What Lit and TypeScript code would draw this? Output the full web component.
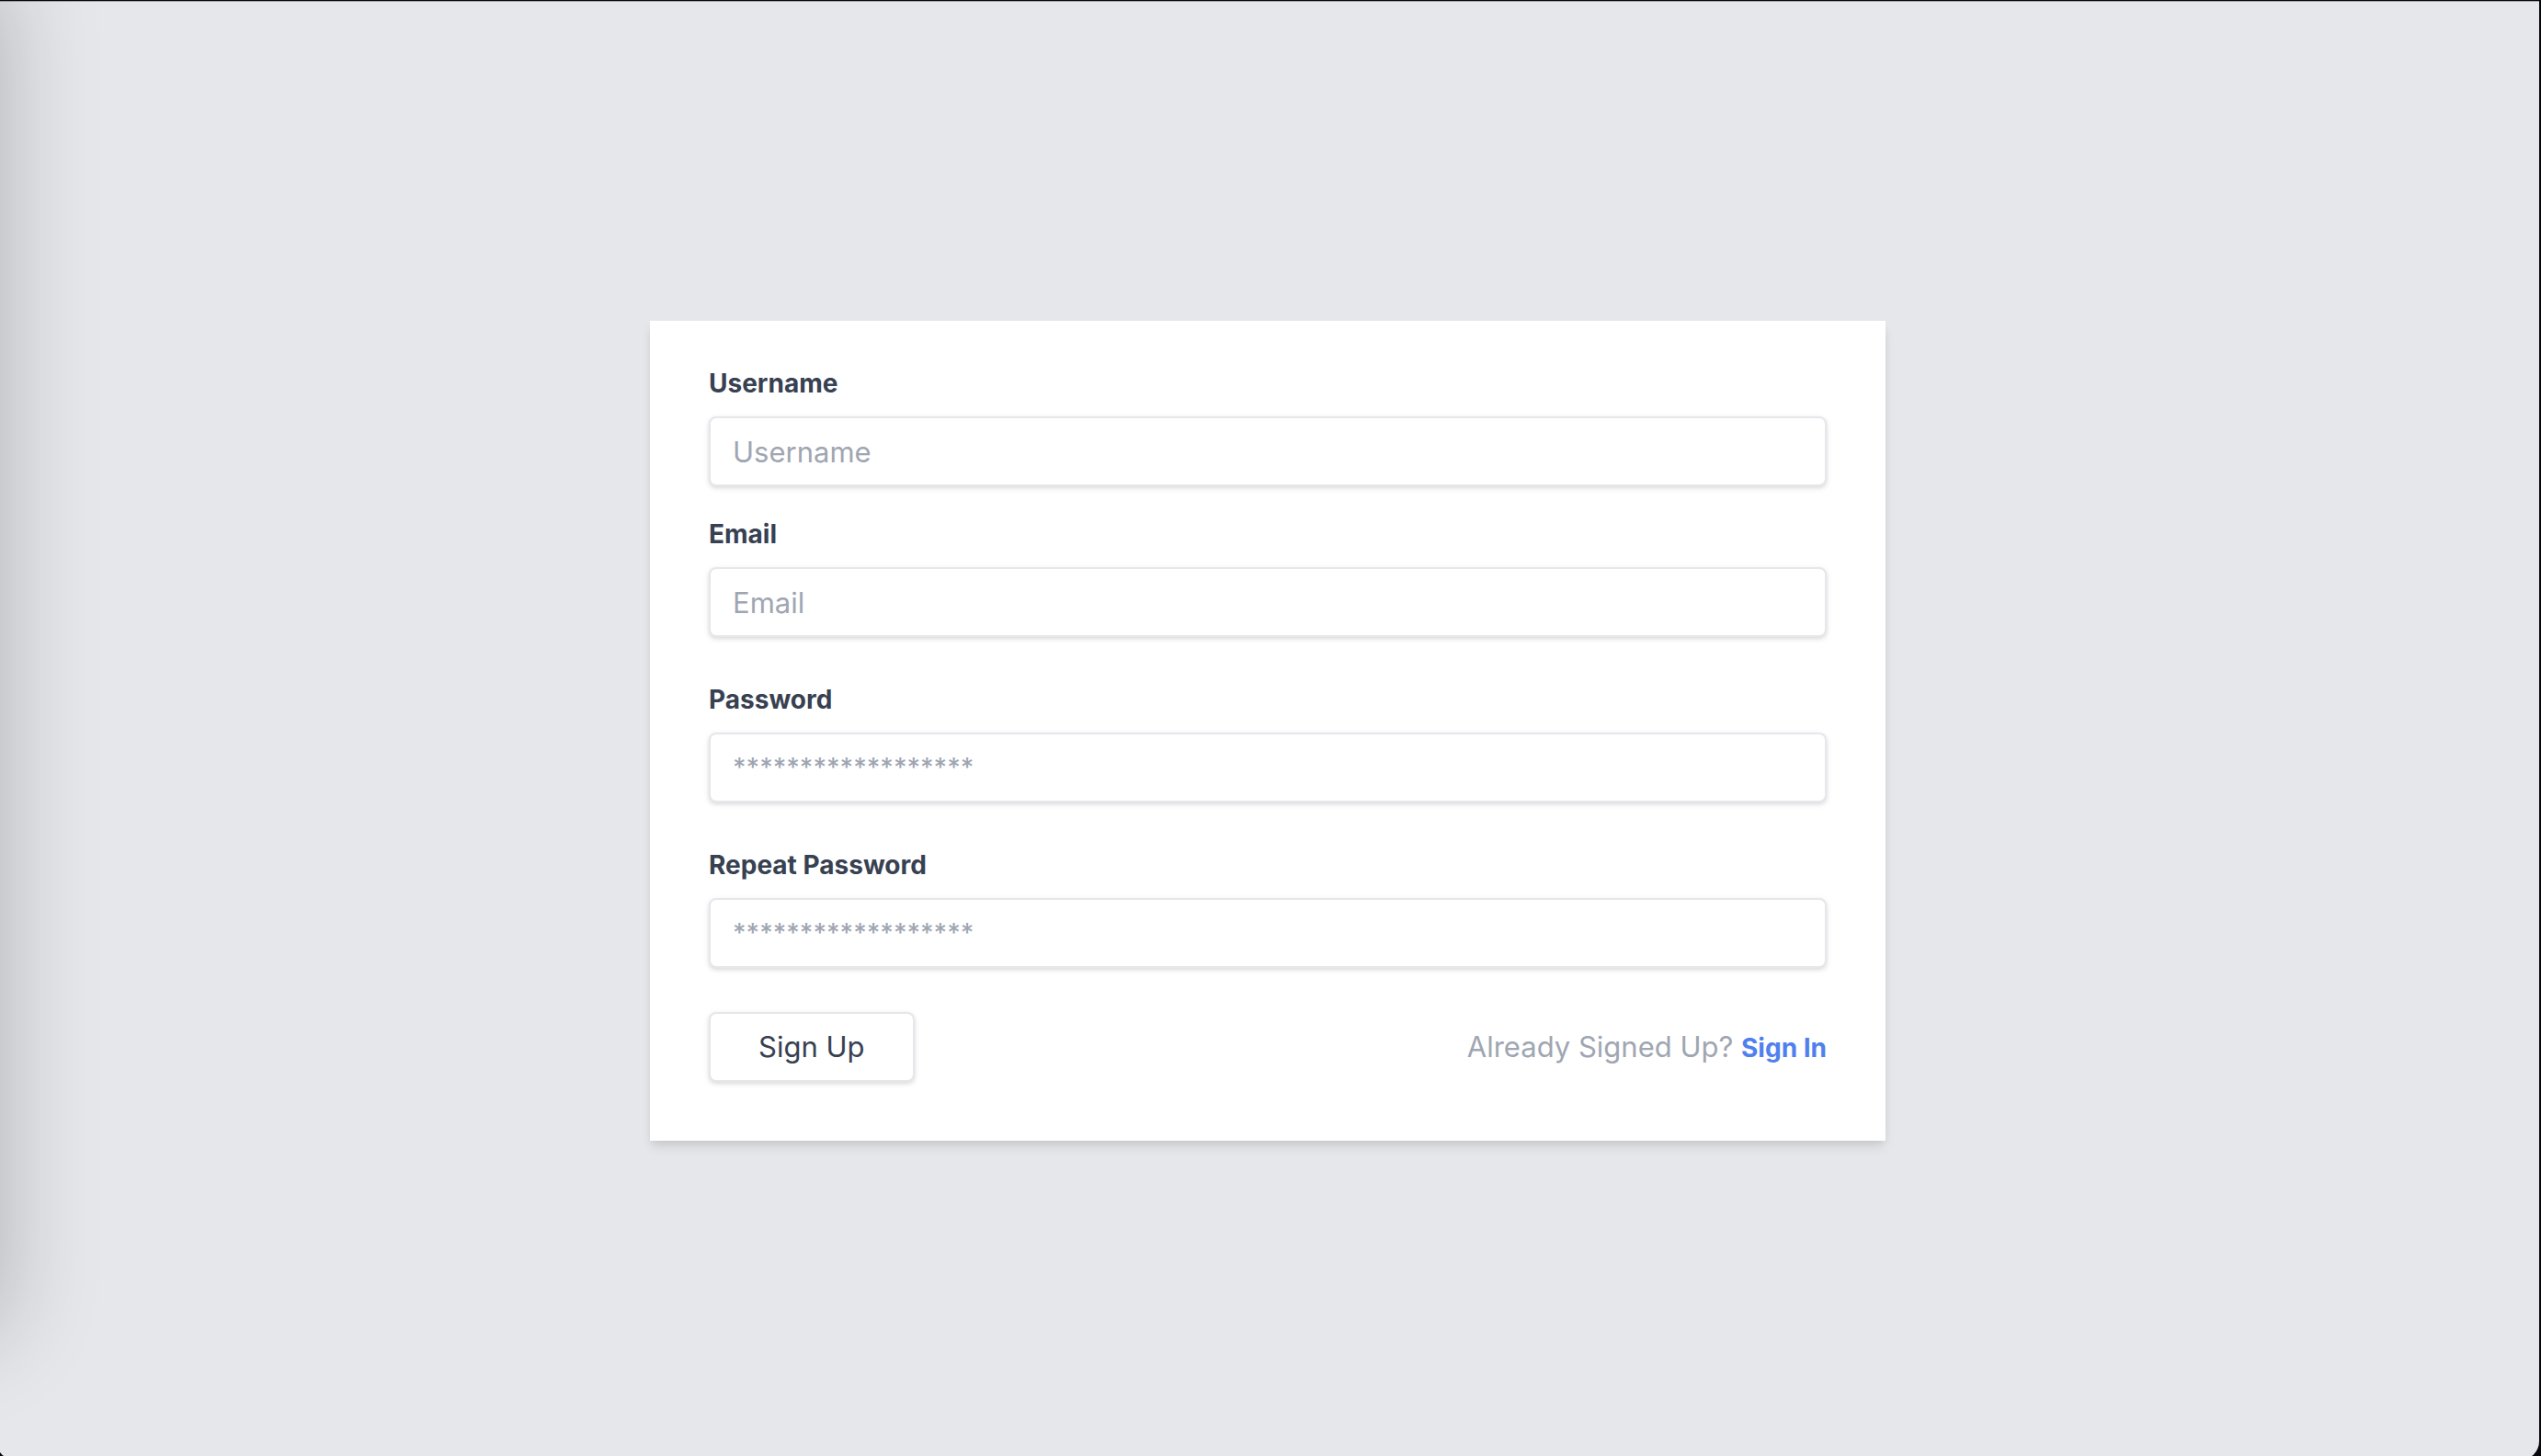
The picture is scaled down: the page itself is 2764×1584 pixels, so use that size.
import { LitElement, html, css } from "lit";
import { customElement } from "lit/decorators.js";

interface Field {
  id: string;
  label: string;
  type: string;
  placeholder: string;
  autocomplete: string;
}

const MASK = "*".repeat(18);

const accountFields: Field[] = [
  { id: "username", label: "Username", type: "text", placeholder: "Username", autocomplete: "username" },
  { id: "email", label: "Email", type: "email", placeholder: "Email", autocomplete: "email" },
];

const passwordFields: Field[] = [
  { id: "password", label: "Password", type: "password", placeholder: MASK, autocomplete: "new-password" },
  { id: "repeat-password", label: "Repeat Password", type: "password", placeholder: MASK, autocomplete: "new-password" },
];

@customElement("sign-up-form")
export class SignUpForm extends LitElement {
  static styles = css`
    :host {
      display: block;
      width: 100%;
      max-width: 1344px;
    }
    .card {
      box-sizing: border-box;
      display: flex;
      flex-direction: column;
      gap: 48px;
      padding: 48px 64px 64px;
      background: #ffffff;
      box-shadow: 0 8px 12px -2px rgba(0, 0, 0, 0.1), 0 4px 8px -2px rgba(0, 0, 0, 0.06);
    }
    .group {
      display: flex;
      flex-direction: column;
      gap: 32px;
    }
    .field {
      display: flex;
      flex-direction: column;
      gap: 16px;
    }
    .label {
      font-size: 28px;
      line-height: 40px;
      font-weight: 700;
      color: #374151;
    }
    .input,
    .button {
      box-sizing: border-box;
      margin: 0;
      border: 2px solid #e5e7eb;
      border-radius: 8px;
      background: #ffffff;
      color: #374151;
      font-family: inherit;
      font-size: 31px;
      line-height: 40px;
      box-shadow: 0 2px 6px rgba(0, 0, 0, 0.1), 0 2px 4px rgba(0, 0, 0, 0.06);
    }
    .input {
      width: 100%;
      height: 76px;
      padding: 16px 24px;
    }
    .input::placeholder {
      color: #9fa6b2;
      opacity: 1;
    }
    .input[type="password"] {
      padding: 14px 24px 18px;
    }
    .input[type="password"]::placeholder {
      font-size: 28px;
      font-weight: 500;
    }
    .button {
      padding: 16px 52px;
      cursor: pointer;
    }
    .footer {
      display: flex;
      align-items: center;
      justify-content: space-between;
    }
    .prompt {
      margin: 0;
      font-size: 31px;
      line-height: 40px;
      color: #9fa6b2;
    }
    .link {
      font-size: 28px;
      font-weight: 700;
      color: #4f80f0;
      text-decoration: none;
    }
  `;

  private renderField(field: Field) {
    return html`
      <div class="field">
        <label class="label" for=${field.id}>${field.label}</label>
        <input
          class="input"
          id=${field.id}
          name=${field.id}
          type=${field.type}
          placeholder=${field.placeholder}
          autocomplete=${field.autocomplete}
        />
      </div>
    `;
  }

  render() {
    return html`
      <form class="card" @submit=${(e: Event) => e.preventDefault()}>
        <div class="group">${accountFields.map((f) => this.renderField(f))}</div>
        ${passwordFields.map((f) => this.renderField(f))}
        <div class="footer">
          <button class="button" type="submit">Sign Up</button>
          <p class="prompt">Already Signed Up? <a class="link" href="#sign-in">Sign In</a></p>
        </div>
      </form>
    `;
  }
}

@customElement("app-root")
export class AppRoot extends LitElement {
  static styles = css`
    :host {
      display: block;
      box-sizing: border-box;
      height: 100vh;
      overflow: hidden;
      position: relative;
      padding: 1px 2px 0 0;
      background: #06060c;
      font-family: Inter, "Liberation Sans", sans-serif;
    }
    /* The window reaches just past the left and bottom edges of the screen. */
    .window {
      box-sizing: border-box;
      display: flex;
      align-items: center;
      justify-content: center;
      min-height: calc(100vh + 3px);
      margin-left: -4px;
      border-top: 1px solid #a9a6a8;
      border-radius: 0 0 20px 20px;
      background: #e5e7eb;
    }
    /* Shadow cast by a neighbouring window beyond the left edge. */
    .neighbour {
      position: absolute;
      top: -60px;
      bottom: 172px;
      left: -400px;
      width: 400px;
      box-shadow: 0 36px 100px rgba(0, 0, 0, 0.24);
      pointer-events: none;
    }
  `;

  render() {
    return html`
      <main class="window"><sign-up-form></sign-up-form></main>
      <div class="neighbour"></div>
    `;
  }
}
